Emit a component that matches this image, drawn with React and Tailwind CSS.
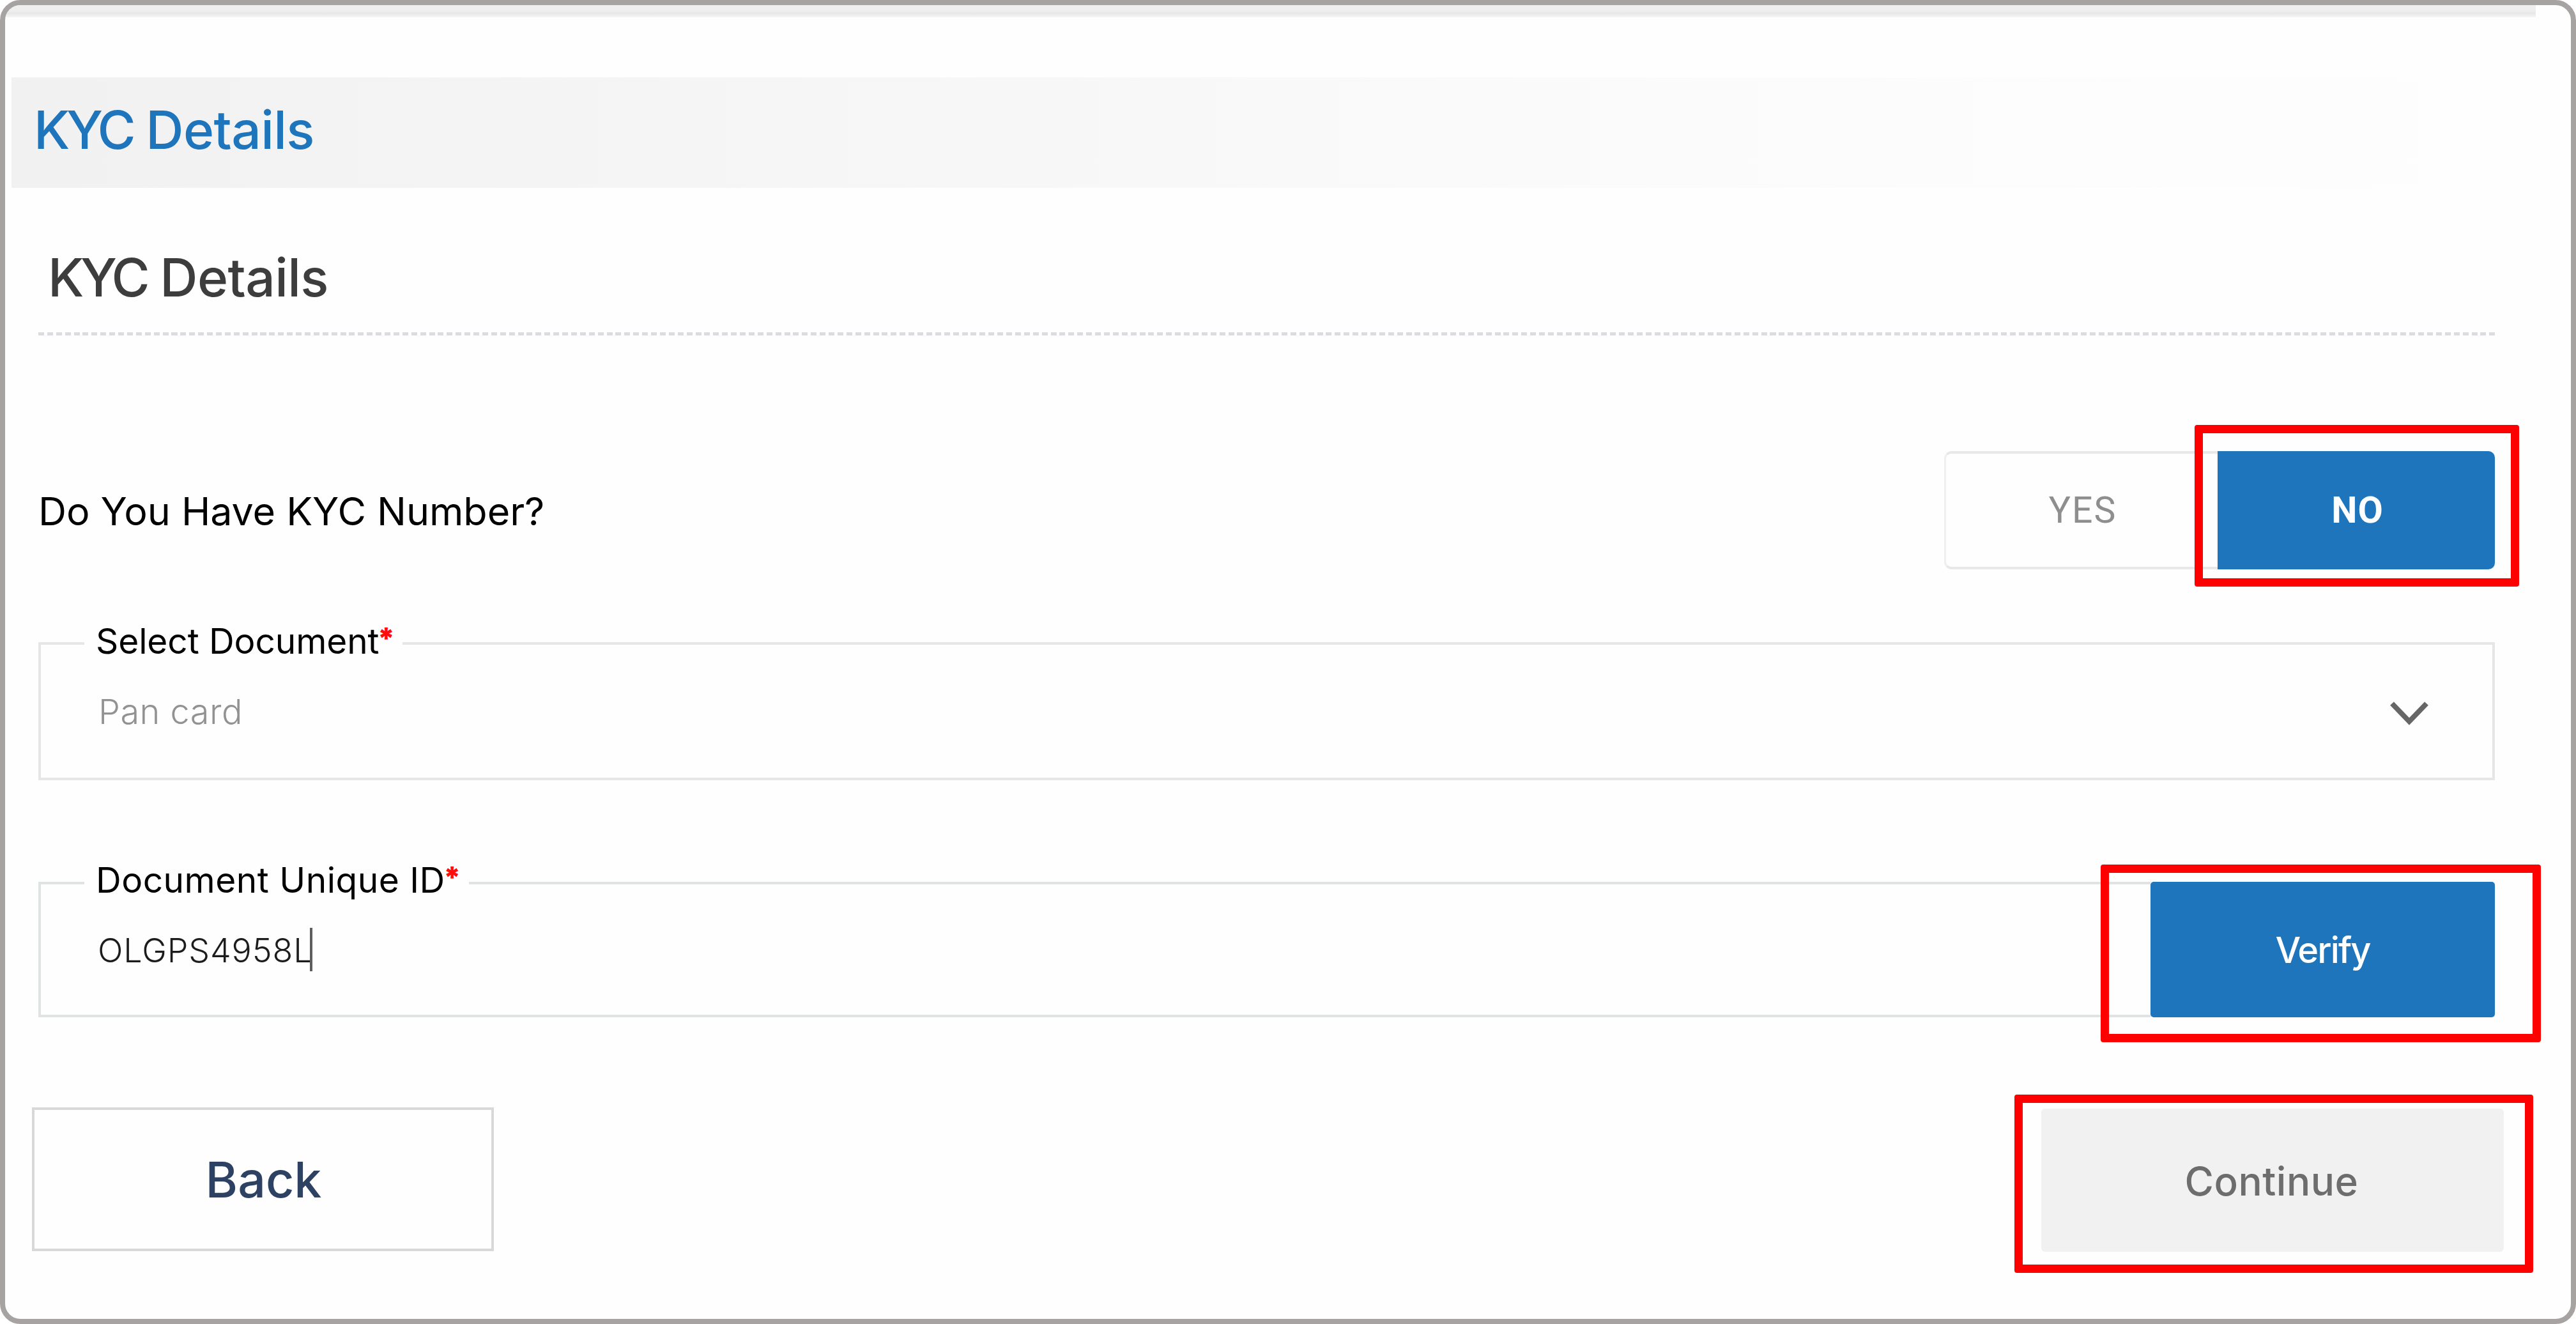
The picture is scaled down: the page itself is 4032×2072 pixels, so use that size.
function FieldLabel({ className, children }) {
  return (
    <label className={`absolute left-[68px] h-[60px] leading-[60px] pl-[18px] bg-[#fefefe] text-[55px] text-black whitespace-nowrap ${className}`}>
      {children}
      <span className="inline-block leading-none text-[46px] font-black text-[#ff0d0d] -translate-y-[8px] -translate-x-[3px] tracking-normal">*</span>
    </label>
  );
}

function Highlight({ className }) {
  return <div className={`absolute border-[13px] border-[#ff0000] rounded-[4px] pointer-events-none ${className}`} />;
}

export default function App() {
  return (
    <div className="w-[4032px] h-[2072px] overflow-hidden bg-white font-['Inter','Liberation_Sans',sans-serif]">
      <div className="w-full h-full border-[8px] border-[#a8a3a3] rounded-[32px] bg-[#fefefe] overflow-hidden flex flex-col">
        <div className="shrink-0 w-[3961px] h-[19px] bg-linear-to-b from-[#efefef] from-40% via-[#e8e8e8] via-70% to-[#f6f6f6]" />

        <header className="shrink-0 mt-[94px] ml-[10px] mr-[46px] h-[173px] pl-[35px] bg-linear-to-r from-[#f1f1f1] via-[#fbfbfb] via-65% to-[#fefefe]">
          <h1 className="h-[166px] leading-[166px] text-[82px] font-[470] tracking-[-0.6px] text-[#1e75bc]">
            <span className="tracking-[-5.5px]">KYC</span> Details
          </h1>
        </header>

        <main className="shrink-0 ml-[52px] mr-[119px]">
          <h2 className="mt-[100px] h-[80px] leading-[82px] pl-[15px] text-[82px] font-[470] tracking-[-0.6px] text-[#3d3d3d]">
            <span className="tracking-[-5.5px]">KYC</span> Details
          </h2>
          <div className="mt-[46px] h-[5px] bg-[repeating-linear-gradient(90deg,#dcdce0_0_9px,transparent_9px_13.9px)]" />

          <div className="relative mt-[181px] h-[185px] flex justify-between">
            <p className="h-[189px] leading-[189px] text-[61px] tracking-[-0.05px] text-black">Do You Have KYC Number?</p>
            <div className="flex h-full w-[862px] font-['Roboto','Liberation_Sans',sans-serif] text-[57px]">
              <button className="w-[428px] border-y-4 border-l-3 border-y-[#e8e8e8] border-l-[#f0f0f0] rounded-l-[12px] tracking-[2px] pl-[3px] text-[#8e8e8e]">YES</button>
              <button className="flex-1 rounded-r-[10px] bg-[#1e75bc] font-bold tracking-[1px] pl-[4px] text-white">NO</button>
            </div>
            <Highlight className="left-[3375px] top-[-41px] w-[508px] h-[253px]" />
          </div>

          <div className="relative mt-[114px] h-[216px] border-4 border-[#e4e6e7] flex justify-between">
            <FieldLabel className="-top-[36px] w-[498px] tracking-[-0.1px]">Select Document</FieldLabel>
            <span className="mt-[65px] h-[80px] leading-[80px] pl-[90px] text-[54px] font-light tracking-[0.5px] text-[#929292]">Pan card</span>
            <svg className="mt-[86px] mr-[98px] w-[64px] h-[44px]" viewBox="0 0 64 44" fill="none" stroke="#666" strokeWidth="8">
              <path d="M5 6 L32 34 L59 6" />
            </svg>
          </div>

          <div className="relative mt-[159px] h-[212px] flex">
            <div className="relative w-[3306px] border-4 border-r-0 border-[#dfe3e3]">
              <FieldLabel className="-top-[37px] w-[602px] tracking-[0.5px]">Document Unique ID</FieldLabel>
              <div className="mt-[68px] h-[68px] pl-[89px] flex items-stretch">
                <span className="leading-[72px] text-[52px] font-light tracking-[0.9px] text-[#1c1c1c]">OLGPS4958L</span>
                <i className="block w-[4px] -ml-[5px] bg-[#5e5e5e]" />
              </div>
            </div>
            <button className="flex-1 rounded-[5px] bg-[#1e75bc] text-[56px] font-medium tracking-[-1.9px] pt-[2px] text-white">Verify</button>
            <Highlight className="left-[3228px] top-[-27px] w-[689px] h-[278px]" />
          </div>

          <div className="relative mt-[141px] -ml-[10px] -mr-[14px] h-[226px] flex justify-between">
            <button className="w-[723px] h-[225px] border-4 border-[#d8d8d8] pt-[2px] pl-[2px] text-[77px] font-[450] text-[#2d4263]">Back</button>
            <button className="w-[724px] h-[224px] mt-[2px] rounded-[6px] bg-[#f1f1f1] pt-[2px] pr-[3px] text-[62px] font-[450] tracking-[0.5px] text-[#6d6d6d]">Continue</button>
            <Highlight className="left-[3103px] top-[-20px] w-[812px] h-[279px]" />
          </div>
        </main>
      </div>
    </div>
  );
}
